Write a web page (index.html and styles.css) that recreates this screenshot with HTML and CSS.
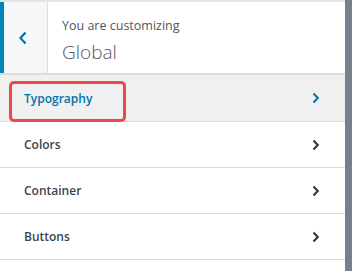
FILE: index.html
```html
<!DOCTYPE html>
<html lang="en">
<head>
  <meta charset="UTF-8">
  <title>Customizer - Global</title>
  <link rel="stylesheet" href="styles.css">
</head>
<body>
  <div class="panel">
    <!-- header with back button -->
    <div class="panel-head">
      <button class="back" type="button" aria-label="Back">
        <svg width="10" height="14" viewBox="0 0 10 14"><path d="M7.5 1.5 L2.5 7 L7.5 12.5" fill="none" stroke="currentColor" stroke-width="2.2"/></svg>
      </button>
      <div class="title">
        <span class="title-small">You are customizing</span>
        <span class="title-big">Global</span>
      </div>
    </div>

    <ul class="sections">
      <li class="section active">
        <span>Typography</span>
        <svg class="chev" width="8" height="12" viewBox="0 0 8 12"><path d="M1.5 1.5 L5.8 6 L1.5 10.5" fill="none" stroke="currentColor" stroke-width="2"/></svg>
        <span class="highlight"></span>
      </li>
      <li class="section">
        <span>Colors</span>
        <svg class="chev" width="8" height="12" viewBox="0 0 8 12"><path d="M1.5 1.5 L5.8 6 L1.5 10.5" fill="none" stroke="currentColor" stroke-width="2"/></svg>
      </li>
      <li class="section">
        <span>Container</span>
        <svg class="chev" width="8" height="12" viewBox="0 0 8 12"><path d="M1.5 1.5 L5.8 6 L1.5 10.5" fill="none" stroke="currentColor" stroke-width="2"/></svg>
      </li>
      <li class="section">
        <span>Buttons</span>
        <svg class="chev" width="8" height="12" viewBox="0 0 8 12"><path d="M1.5 1.5 L5.8 6 L1.5 10.5" fill="none" stroke="currentColor" stroke-width="2"/></svg>
      </li>
    </ul>
  </div>
  <div class="scrollbar"></div>
</body>
</html>
```

FILE: styles.css
```css
/* 全体 */
body {
  margin: 0;
  height: 271px;
  display: flex;
  background: #fff;
  font-family: "Open Sans", "Noto Sans", sans-serif;
  color: #3c434a;
  overflow: hidden;
}
.panel {
  flex: 1;
  background: #fff;
}
.scrollbar {
  width: 7px;
  background: #75818f;
}
/* ヘッダ */
.panel-head {
  display: flex;
  height: 71px;
  border-top: 2px solid #e4e4e6;
  border-bottom: 2px solid #dcdcde;
  background: #fff;
}
.back {
  width: 48px;
  border: none;
  border-left: 4px solid #0085ba;
  border-right: 1px solid #dcdcde;
  background: #f6f7f7;
  color: #0073aa;
  padding: 0 5px 0 0;
  display: flex;
  align-items: center;
  justify-content: center;
}
.title {
  display: flex;
  flex-direction: column;
  padding: 15px 0 0 14px;
}
.title-small {
  font-size: 12.5px;
  line-height: 18px;
  color: #50575e;
}
.title-big {
  font-size: 19px;
  font-weight: 300;
  line-height: 28px;
  margin-top: 3px;
  color: #50575e;
}
/* セクション一覧 */
.sections {
  list-style: none;
  margin: 0;
  padding: 0;
}
.section {
  position: relative;
  display: flex;
  align-items: center;
  justify-content: space-between;
  height: 45px;
  padding: 0 25px 0 24px;
  border-bottom: 1px solid #dcdcde;
  font-size: 12px;
  font-weight: 600;
  color: #3c434a;
}
.section .chev {
  color: #2c3338;
}
.section.active {
  height: 46px;
  background: #f0f0f1;
  color: #0073aa;
}
.section.active .chev {
  color: #0073aa;
}
/* 注釈の赤枠 */
.highlight {
  position: absolute;
  left: 9px;
  top: 6px;
  width: 111px;
  height: 35px;
  border: 3px solid #ee4747;
  border-radius: 5px;
}
```
